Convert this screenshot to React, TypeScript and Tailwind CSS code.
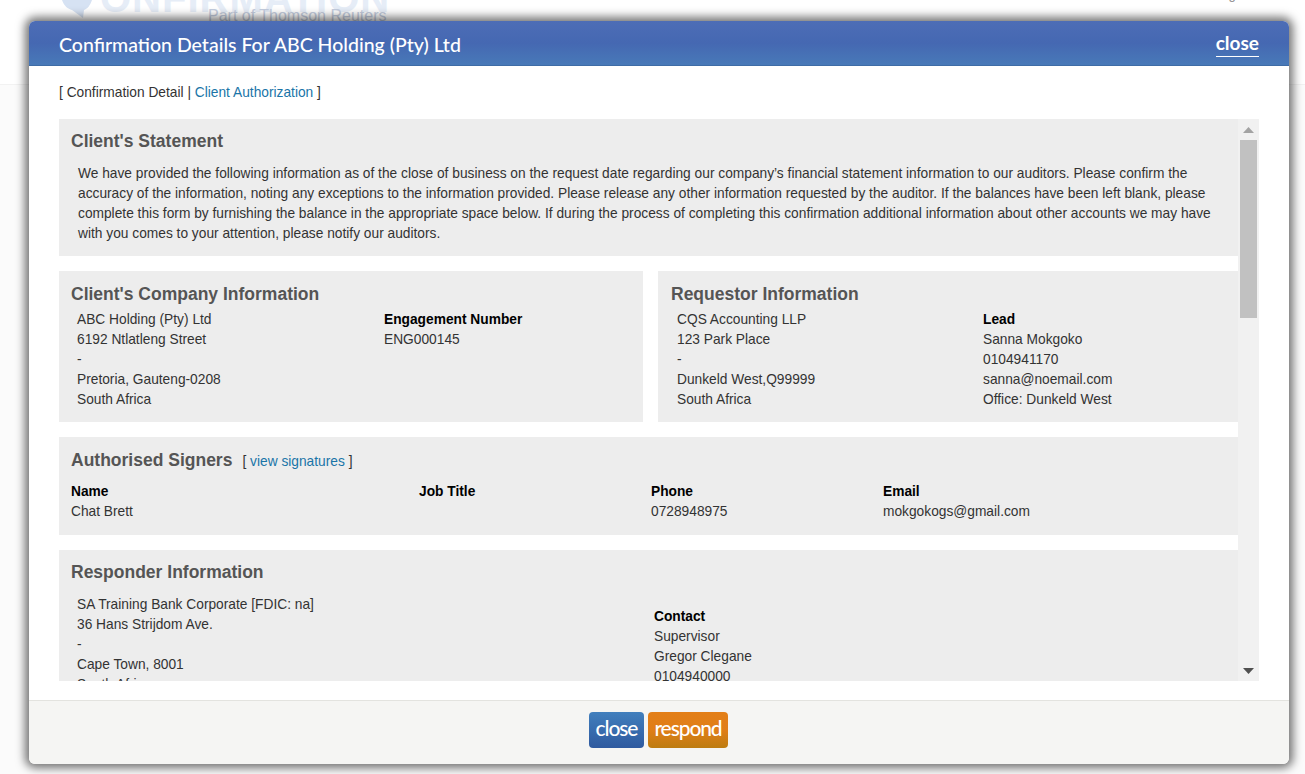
import type { ReactNode } from 'react';

const Heading = ({ children }: { children: ReactNode }) => (
  <h2 className="text-[17.5px] font-bold leading-[20px] text-[#555555]">{children}</h2>
);

const Lines = ({ items, className = '' }: { items: string[]; className?: string }) => (
  <div className={className}>
    {items.map((line, i) => (
      <div key={i}>{line}</div>
    ))}
  </div>
);

const Label = ({ children }: { children: ReactNode }) => (
  <div className="font-bold text-black">{children}</div>
);

const ScrollBar = () => (
  <div className="flex w-[21px] shrink-0 flex-col items-center bg-[#f1f1f1]">
    <div className="flex h-[21px] w-full items-center justify-center">
      <svg width="11" height="6" viewBox="0 0 11 6">
        <path d="M5.5 0 L11 6 L0 6 Z" fill="#a3a3a3" />
      </svg>
    </div>
    <div className="h-[178px] w-[17px] bg-[#c1c1c1]" />
    <div className="flex-1" />
    <div className="flex h-[21px] w-full items-center justify-center">
      <svg width="11" height="6" viewBox="0 0 11 6">
        <path d="M0 0 L11 0 L5.5 6 Z" fill="#505050" />
      </svg>
    </div>
  </div>
);

const PageBehind = () => (
  <div className="h-[774px] w-full bg-[#fbfbfb]">
    <div className="relative h-[85px] overflow-hidden border-b border-[#f2f2f2] bg-white">
      <svg className="absolute left-[60px] top-0" width="34" height="18" viewBox="0 0 34 18">
        <path d="M2 0 L32 0 C30 6 27 9 24 10 L23 18 L12 10 C8 9 4 6 2 0 Z" fill="#d6e2f3" />
      </svg>
      <div className="absolute left-[100px] top-[-12px] text-[40px] font-bold leading-[20px] tracking-[1px] text-[#e6edf7]">
        ONFIRMATION
      </div>
      <div className="absolute left-[208px] top-[8px] text-[16px] leading-[16px] text-[#c5cee0]">
        Part of Thomson Reuters
      </div>
      <div className="absolute left-[1214px] top-[-13px] text-[13px] leading-[16px] text-[#888888]">Logout</div>
    </div>
  </div>
);

export default function App() {
  return (
    <div className="relative h-[774px] overflow-hidden font-['Liberation_Sans',Arial,sans-serif] text-[13.75px] leading-[20px] text-[#333333]">
      <PageBehind />

      <div className="absolute left-[29px] top-[21px] flex h-[743px] w-[1260px] flex-col overflow-hidden rounded-[6px] bg-white shadow-[0_0_10px_4px_rgba(0,0,0,0.55)]">
        <div className="flex h-[45px] shrink-0 items-center justify-between border-b border-[#3f6ca6] bg-gradient-to-b from-[#4d6db6] via-[#4568b2] to-[#4879b8] px-[30px] pt-[3px] font-['Lato',sans-serif] text-white">
          <div className="text-[19.5px] font-medium">Confirmation Details For ABC Holding (Pty) Ltd</div>
          <a className="mb-[1px] border-b border-white pb-[3px] text-[19px] font-bold leading-[21px]">close</a>
        </div>

        <div className="flex min-h-0 flex-1 flex-col px-[30px]">
          <div className="flex h-[53px] shrink-0 items-center">
            <span>[ Confirmation Detail | <a className="text-[#1a75a8]">Client Authorization</a> ]</span>
          </div>

          <div className="flex h-[562px] overflow-hidden">
            <div className="flex min-w-0 flex-1 flex-col gap-[15px] overflow-hidden">
              <section className="h-[137px] shrink-0 bg-[#ededed] pl-[12px] pt-[12px]">
                <Heading>Client's Statement</Heading>
                <p className="ml-[7px] mt-[13px] w-[1140px]">
                  We have provided the following information as of the close of business on the request date regarding our company’s financial statement information to our auditors. Please confirm the accuracy of the information, noting any exceptions to the information provided. Please release any other information requested by the auditor. If the balances have been left blank, please complete this form by furnishing the balance in the appropriate space below. If during the process of completing this confirmation additional information about other accounts we may have with you comes to your attention, please notify our auditors.
                </p>
              </section>

              <div className="flex h-[151px] shrink-0 gap-[15px]">
                <section className="w-[584px] bg-[#ededed] pl-[12px] pt-[13px]">
                  <Heading>Client's Company Information</Heading>
                  <div className="ml-[6px] mt-[6px] flex">
                    <Lines
                      className="w-[307px]"
                      items={['ABC Holding (Pty) Ltd', '6192 Ntlatleng Street', '-', 'Pretoria, Gauteng-0208', 'South Africa']}
                    />
                    <div>
                      <Label>Engagement Number</Label>
                      <div>ENG000145</div>
                    </div>
                  </div>
                </section>
                <section className="flex-1 bg-[#ededed] pl-[13px] pt-[13px]">
                  <Heading>Requestor Information</Heading>
                  <div className="ml-[6px] mt-[6px] flex">
                    <Lines
                      className="w-[306px]"
                      items={['CQS Accounting LLP', '123 Park Place', '-', 'Dunkeld West,Q99999', 'South Africa']}
                    />
                    <div>
                      <Label>Lead</Label>
                      <Lines items={['Sanna Mokgoko', '0104941170', 'sanna@noemail.com', 'Office: Dunkeld West']} />
                    </div>
                  </div>
                </section>
              </div>

              <section className="h-[98px] shrink-0 bg-[#ededed] pl-[12px] pt-[13px]">
                <div className="flex items-baseline">
                  <Heading>Authorised Signers</Heading>
                  <span className="ml-[10px]">[ <a className="text-[#1a75a8]">view signatures</a> ]</span>
                </div>
                <div className="mt-[10px] grid grid-cols-[348px_232px_232px_1fr]">
                  <Label>Name</Label>
                  <Label>Job Title</Label>
                  <Label>Phone</Label>
                  <Label>Email</Label>
                  <div>Chat Brett</div>
                  <div />
                  <div>0728948975</div>
                  <div>mokgokogs@gmail.com</div>
                </div>
              </section>

              <section className="h-[200px] shrink-0 bg-[#ededed] pl-[12px] pt-[12px]">
                <Heading>Responder Information</Heading>
                <div className="ml-[6px] mt-[13px] flex">
                  <Lines
                    className="w-[577px]"
                    items={['SA Training Bank Corporate [FDIC: na]', '36 Hans Strijdom Ave.', '-', 'Cape Town, 8001', 'South Africa']}
                  />
                  <div className="pt-[12px]">
                    <Label>Contact</Label>
                    <Lines items={['Supervisor', 'Gregor Clegane', '0104940000']} />
                  </div>
                </div>
              </section>
            </div>
            <ScrollBar />
          </div>

          <div className="flex-1" />
        </div>

        <div className="flex h-[64px] shrink-0 items-start justify-center gap-[4px] border-t border-[#e3e3df] bg-[#f5f5f3] pr-[1px] pt-[11px] font-['Lato',sans-serif] text-[21px] font-medium tracking-[-1.1px] text-white">
          <button className="flex h-[36px] w-[55px] items-center justify-center rounded-[4px] bg-gradient-to-b from-[#417fbd] to-[#2f5a9f] pb-[5px]">close</button>
          <button className="flex h-[36px] w-[80px] items-center justify-center rounded-[4px] bg-gradient-to-b from-[#e37f18] via-[#e07e18] to-[#bd7c10] pb-[5px]">respond</button>
        </div>
      </div>
    </div>
  );
}
